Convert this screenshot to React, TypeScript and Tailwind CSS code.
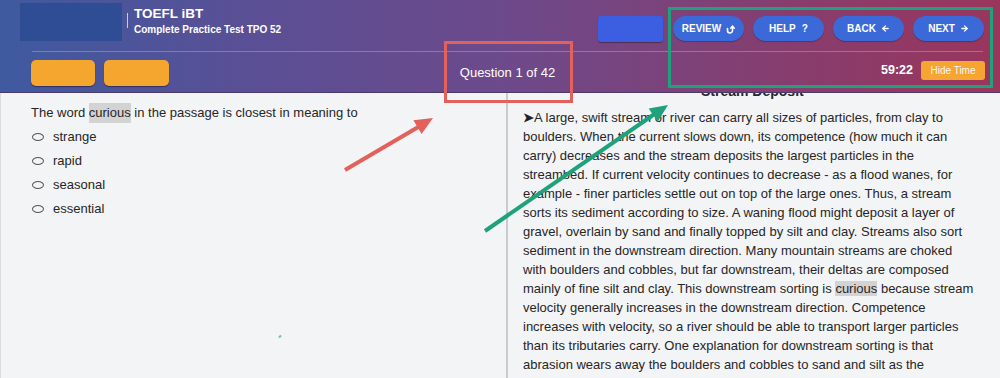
import { ArrowLeft, ArrowRight } from "lucide-react";

const passage: string[] = [
  "A large, swift stream or river can carry all sizes of particles, from clay to",
  "boulders. When the current slows down, its competence (how much it can",
  "carry) decreases and the stream deposits the largest particles in the",
  "streambed. If current velocity continues to decrease - as a flood wanes, for",
  "example - finer particles settle out on top of the large ones. Thus, a stream",
  "sorts its sediment according to size. A waning flood might deposit a layer of",
  "gravel, overlain by sand and finally topped by silt and clay. Streams also sort",
  "sediment in the downstream direction. Many mountain streams are choked",
  "with boulders and cobbles, but far downstream, their deltas are composed",
  "mainly of fine silt and clay. This downstream sorting is @curious@ because stream",
  "velocity generally increases in the downstream direction. Competence",
  "increases with velocity, so a river should be able to transport larger particles",
  "than its tributaries carry. One explanation for downstream sorting is that",
  "abrasion wears away the boulders and cobbles to sand and silt as the",
];

const options = ["strange", "rapid", "seasonal", "essential"];

function Highlight({ children }: { children: React.ReactNode }) {
  return <span className="bg-[#d3d3d3]">{children}</span>;
}

// renders a passage line, @word@ gets the grey highlight
function PassageLine({ text, first }: { text: string; first?: boolean }) {
  const parts = text.split("@");
  return (
    <div className="h-[19px] whitespace-nowrap">
      {first && <span className="font-bold text-[#222]">➤</span>}
      {parts.map((p, i) => (i % 2 === 1 ? <Highlight key={i}>{p}</Highlight> : <span key={i}>{p}</span>))}
    </div>
  );
}

function Pill({ label, icon }: { label: string; icon: React.ReactNode }) {
  return (
    <button className="flex h-[25px] w-[71px] items-center justify-center gap-[5px] rounded-full bg-[#3b69d7] text-[10px] font-bold text-white shadow-[0_1px_1px_rgba(0,0,0,0.25)]">
      <span>{label}</span>
      {icon}
    </button>
  );
}

function ReviewIcon() {
  return (
    <svg width="9" height="10" viewBox="0 0 9 10" fill="none" stroke="white" strokeWidth="1.6" strokeLinecap="round">
      <path d="M1.5 4.5v2a2.5 2.5 0 0 0 5 0V2.5" />
      <path d="M4.8 4.2L6.5 2.2L8.2 4.2" />
    </svg>
  );
}

function Header() {
  return (
    <header className="relative z-10 h-[93px] shrink-0 border-b border-[#4b3a6c] bg-[linear-gradient(90deg,#3f5a9f_0%,#5a4f95_25%,#6c4a8b_50%,#833f72_75%,#9a365c_100%)]">
      {/* top row */}
      <div className="flex h-[51px]">
        <div className="ml-[20px] mt-[3px] h-[38px] w-[102px] bg-[#2f4d95]" />
        <div className="ml-[5px] mt-[13px] h-[15px] w-px bg-white/70" />
        <div className="ml-[6px] mt-[6px] flex flex-col text-white">
          <span className="text-[13.5px] font-bold leading-[15px]">TOEFL iBT</span>
          <span className="mt-[3px] text-[10px] font-bold leading-[12px]">Complete Practice Test TPO 52</span>
        </div>
        <div className="flex-1" />
        <div className="mt-[16px] flex h-[25px] items-start gap-[9px] pr-[16px]">
          <div className="mr-[1px] h-[26px] w-[65px] rounded-[3px] bg-[#3c5fe2] shadow-[0_1px_1px_rgba(0,0,0,0.35)]" />
          <Pill label="REVIEW" icon={<ReviewIcon />} />
          <Pill label="HELP" icon={<span className="ml-[1px]">?</span>} />
          <Pill label="BACK" icon={<ArrowLeft size={9} strokeWidth={3.5} />} />
          <Pill label="NEXT" icon={<ArrowRight size={9} strokeWidth={3.5} />} />
        </div>
      </div>
      <div className="ml-[32px] mr-[17px] h-px bg-white/25" />
      {/* bottom row */}
      <div className="flex h-[41px] items-start">
        <div className="ml-[31px] mt-[8px] flex gap-[9px]">
          <div className="h-[26px] w-[64px] rounded-[5px] bg-[#f5a62e] shadow-[0_1px_1px_rgba(40,20,60,0.6)]" />
          <div className="h-[26px] w-[65px] rounded-[5px] bg-[#f5a62e] shadow-[0_1px_1px_rgba(40,20,60,0.6)]" />
        </div>
        <div className="flex flex-1 justify-center pt-[13px] pr-[35px]">
          <span className="text-[13px] leading-[15px] text-white">Question 1 of 42</span>
        </div>
        <div className="mt-[9px] flex items-center gap-[8px] pr-[15px]">
          <span className="text-[12.5px] font-bold text-white">59:22</span>
          <div className="flex h-[19px] w-[64px] items-center justify-center rounded-[3px] bg-[#f6a533] text-[10px] text-white/95">
            Hide Time
          </div>
        </div>
      </div>
    </header>
  );
}

function Annotations() {
  return (
    <svg className="pointer-events-none absolute left-0 top-0 z-20" width="1000" height="378" viewBox="0 0 1000 378">
      <rect x="445.5" y="42.5" width="126" height="59" fill="none" stroke="#e4605b" strokeWidth="3" />
      <line x1="345" y1="170" x2="420" y2="126" stroke="#e4605b" strokeWidth="4" />
      <polygon points="433,118 421.6,134.1 413.4,120.3" fill="#e4605b" />
      <rect x="669.5" y="8.5" width="322" height="78" fill="none" stroke="#1fa27b" strokeWidth="3" />
      <line x1="485" y1="231" x2="656" y2="113" stroke="#1fa27b" strokeWidth="4" />
      <polygon points="668,105 657.7,121.8 648.7,108.6" fill="#1fa27b" />
    </svg>
  );
}

export default function App() {
  return (
    <div className="relative flex h-[378px] w-[1000px] flex-col overflow-hidden bg-[#f3f4f6] font-['Liberation_Sans',Arial,sans-serif] text-[#262626]">
      <Header />
      <main className="flex flex-1 overflow-hidden">
        <section className="w-[506px] shrink-0 border-l border-[#dcdcdc] pl-[30px] pt-[8px] text-[13px]">
          <div className="flex h-[24px] items-center">
            The word&nbsp;<Highlight>curious</Highlight>&nbsp;in the passage is closest in meaning to
          </div>
          {options.map((o) => (
            <div key={o} className="flex h-[24px] items-center">
              <span className="ml-[1px] h-[8px] w-[12px] rounded-[50%] border border-[#555]" />
              <span className="ml-[9px]">{o}</span>
            </div>
          ))}
          <div className="ml-[248px] mt-[114px] h-[3px] w-[2px] rotate-45 bg-[#7fbf9f]" />
        </section>
        <section className="flex-1 overflow-hidden border-l-2 border-[#cbcbcb] pl-[15px] text-[13px] leading-[19px]">
          <div className="-mt-[11px]">
            <div className="h-[19px] pl-[178px] text-[14px] font-bold">Stream Deposit</div>
            <div className="mt-[7px]">
              {passage.map((l, i) => (
                <PassageLine key={i} text={l} first={i === 0} />
              ))}
            </div>
          </div>
        </section>
      </main>
      <Annotations />
    </div>
  );
}
